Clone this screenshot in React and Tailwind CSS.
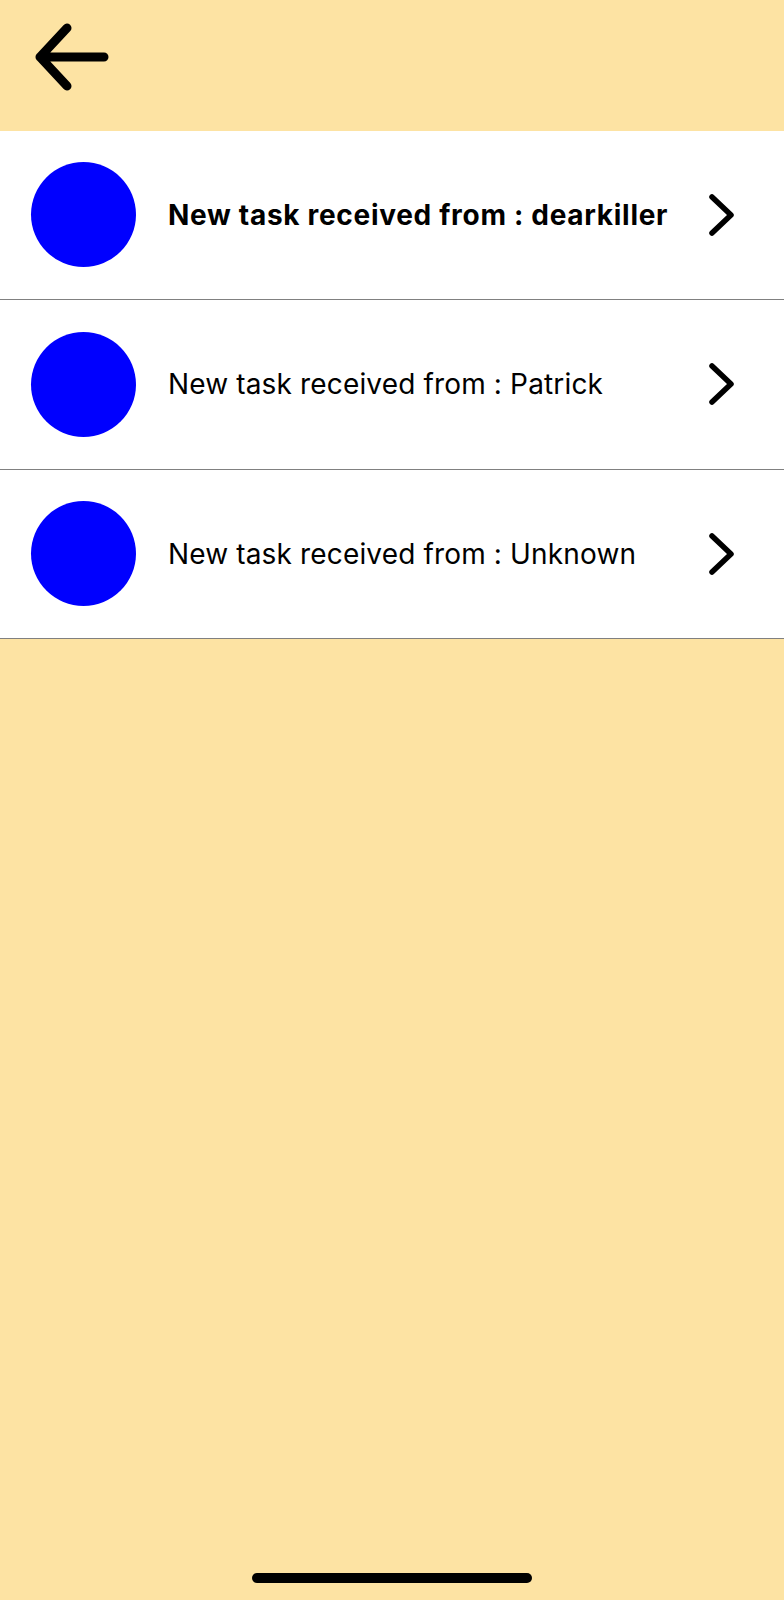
import { useState } from 'react';

const tasks = [
  { id: 1, from: 'dearkiller', unread: true },
  { id: 2, from: 'Patrick', unread: false },
  { id: 3, from: 'Unknown', unread: false },
];

function BackArrow() {
  return (
    <svg width="76" height="70" viewBox="0 0 76 70" fill="none">
      <path
        d="M70 35H6M6 35L33 6M6 35L33 64"
        stroke="black"
        strokeWidth="9"
        strokeLinecap="round"
        strokeLinejoin="round"
      />
    </svg>
  );
}

function Chevron() {
  return (
    <svg width="30" height="44" viewBox="0 0 30 44" fill="none">
      <path
        d="M5 4L24 22L5 40"
        stroke="black"
        strokeWidth="5.5"
        strokeLinecap="round"
        strokeLinejoin="round"
      />
    </svg>
  );
}

function TaskRow({ task, onOpen }) {
  return (
    <button
      type="button"
      onClick={() => onOpen(task.id)}
      className="flex h-[169.5px] w-full items-center border-b-[1.5px] border-[#808080] bg-white pl-[31px] pr-[47px] text-left"
    >
      <span className="h-[105px] w-[105px] shrink-0 rounded-full bg-[#0000ff]" />
      <span
        className={
          'ml-[32px] flex-1 text-[28px] leading-none text-black [font-feature-settings:"calt"_0] ' +
          (task.unread ? 'font-bold tracking-[0.7px]' : 'font-normal tracking-[0.15px]')
        }
      >
        New task received from : {task.from}
      </span>
      <Chevron />
    </button>
  );
}

export default function App() {
  const [items, setItems] = useState(tasks);

  function openTask(id) {
    setItems((prev) => prev.map((t) => (t.id === id ? { ...t, unread: false } : t)));
  }

  return (
    <div
      className="flex h-[1600px] w-full flex-col bg-[#fde3a3]"
      style={{ fontFamily: 'Inter, "Noto Sans", sans-serif' }}
    >
      <header className="flex h-[130.5px] shrink-0 items-center pl-[34px] pb-[16px]">
        <BackArrow />
      </header>
      <ul>
        {items.map((t) => (
          <li key={t.id}>
            <TaskRow task={t} onOpen={openTask} />
          </li>
        ))}
      </ul>
      <div className="flex-1" />
      <div className="flex justify-center pb-[17px]">
        <div className="h-[10px] w-[280px] rounded-full bg-black" />
      </div>
    </div>
  );
}
